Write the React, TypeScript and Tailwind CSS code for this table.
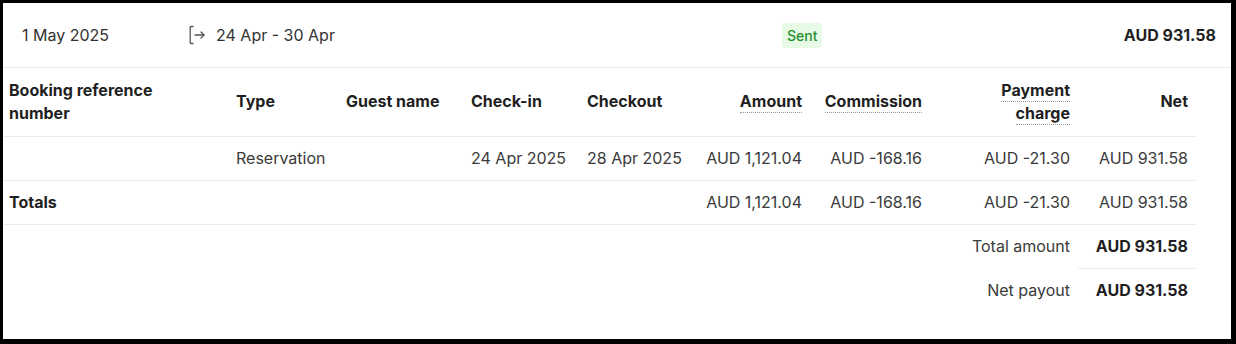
import React from 'react';

const rows = [
  {
    ref: '',
    type: 'Reservation',
    guest: '',
    checkIn: '24 Apr 2025',
    checkOut: '28 Apr 2025',
    amount: 'AUD 1,121.04',
    commission: 'AUD -168.16',
    payment: 'AUD -21.30',
    net: 'AUD 931.58',
  },
];

function ExitIcon() {
  return (
    <svg width="17" height="20" viewBox="0 0 17 20" fill="none" stroke="#555" strokeWidth={1.3} strokeLinecap="round" strokeLinejoin="round">
      <path d="M4 1.5H2.2a1 1 0 0 0-1 1v15a1 1 0 0 0 1 1H4" />
      <path d="M6 10h9" />
      <path d="M12 7l3 3-3 3" />
    </svg>
  );
}

function Tip({ children }: { children: React.ReactNode }) {
  return <span className="border-b border-dotted border-[#9a9a9a] pb-[1px]">{children}</span>;
}

export default function App() {
  const th = 'px-2 font-bold text-[#1f1f1f]';
  const td = 'px-2 text-[#3a3a3a]';
  return (
    <div
      className="box-border h-[344px] w-[1236px] border-t-[3px] border-r-[5px] border-b-[5px] border-l-[3px] border-black bg-white text-[16px] leading-[23px]"
      style={{ fontFamily: 'Inter, "Noto Sans", sans-serif' }}
    >
      <div className="flex h-[65px] items-center border-b border-[#ececec] pr-[15px] pl-[19px]">
        <div className="w-[167px] text-[#333]">1 May 2025</div>
        <div className="flex w-[593px] items-center gap-[10px] text-[#333]">
          <ExitIcon />
          <span>24 Apr - 30 Apr</span>
        </div>
        <span className="rounded-[4px] bg-[#e6fae6] px-[5px] py-[1px] text-[14px] leading-[23px] font-medium text-[#1f8f2a]">Sent</span>
        <div className="flex-1 text-right font-bold text-[#1f1f1f]">AUD 931.58</div>
      </div>

      <table className="w-[1193px] table-fixed border-collapse">
        <colgroup>
          <col className="w-[225px]" />
          <col className="w-[110px]" />
          <col className="w-[125px]" />
          <col className="w-[116px]" />
          <col className="w-[116px]" />
          <col className="w-[115px]" />
          <col className="w-[120px]" />
          <col className="w-[148px]" />
          <col className="w-[118px]" />
        </colgroup>
        <thead>
          <tr className="h-[68px] border-b border-[#ececec]">
            <th className="pr-2 pl-[6px] text-left font-bold text-[#1f1f1f]">
              Booking reference
              <br />
              number
            </th>
            <th className={`${th} text-left`}>Type</th>
            <th className={`${th} text-left`}>Guest name</th>
            <th className={`${th} text-left`}>Check-in</th>
            <th className={`${th} text-left`}>Checkout</th>
            <th className={`${th} text-right`}>
              <Tip>Amount</Tip>
            </th>
            <th className={`${th} text-right`}>
              <Tip>Commission</Tip>
            </th>
            <th className={`${th} text-right`}>
              <Tip>Payment</Tip>
              <br />
              <Tip>charge</Tip>
            </th>
            <th className={`${th} text-right`}>Net</th>
          </tr>
        </thead>
        <tbody>
          {rows.map((r, i) => (
            <tr key={i} className="h-[44px] border-b border-[#ececec]">
              <td className="pr-2 pl-[6px]">{r.ref}</td>
              <td className={`${td} text-left`}>{r.type}</td>
              <td className={`${td} text-left`}>{r.guest}</td>
              <td className={`${td} text-left`}>{r.checkIn}</td>
              <td className={`${td} text-left`}>{r.checkOut}</td>
              <td className={`${td} text-right`}>{r.amount}</td>
              <td className={`${td} text-right`}>{r.commission}</td>
              <td className={`${td} text-right`}>{r.payment}</td>
              <td className={`${td} text-right`}>{r.net}</td>
            </tr>
          ))}
          <tr className="h-[44px] border-b border-[#ececec]">
            <td className="pr-2 pl-[6px] font-bold text-[#1f1f1f]">Totals</td>
            <td colSpan={4}></td>
            <td className={`${td} text-right`}>AUD 1,121.04</td>
            <td className={`${td} text-right`}>AUD -168.16</td>
            <td className={`${td} text-right`}>AUD -21.30</td>
            <td className={`${td} text-right`}>AUD 931.58</td>
          </tr>
          <tr className="h-[44px]">
            <td colSpan={7}></td>
            <td className={`${td} text-right`}>Total amount</td>
            <td className="border-b border-[#ececec] px-2 text-right font-bold text-[#1f1f1f]">AUD 931.58</td>
          </tr>
          <tr className="h-[44px]">
            <td colSpan={7}></td>
            <td className={`${td} text-right`}>Net payout</td>
            <td className="px-2 text-right font-bold text-[#1f1f1f]">AUD 931.58</td>
          </tr>
        </tbody>
      </table>
    </div>
  );
}
